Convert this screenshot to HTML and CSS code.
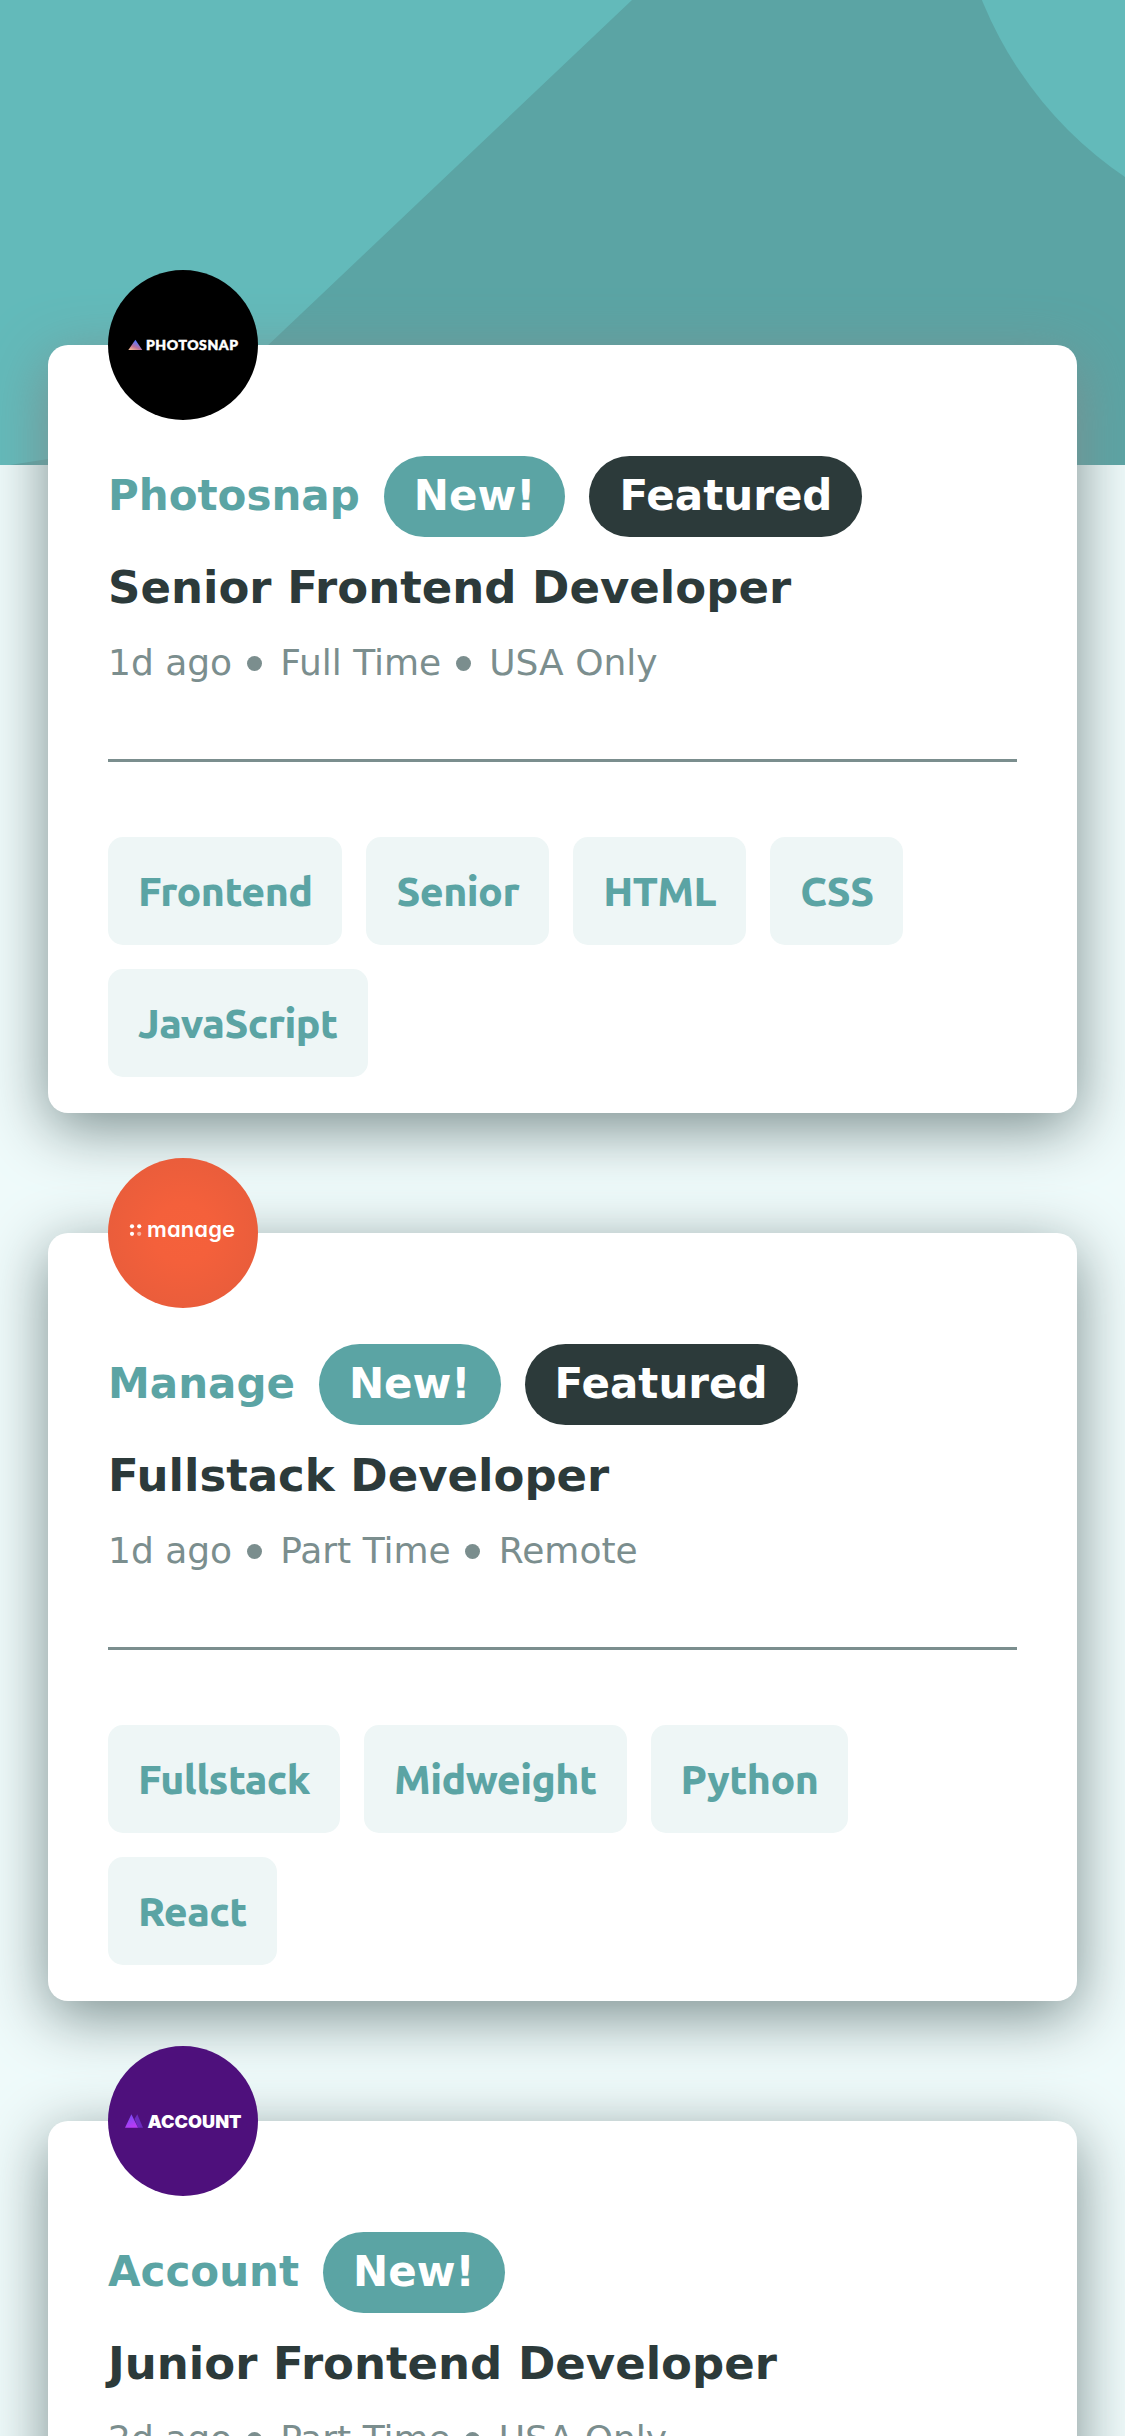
FILE: index.html
```html
<!DOCTYPE html>
<html lang="en">
<head>
<meta charset="utf-8">
<title>Job listings</title>
<link rel="stylesheet" href="styles.css">
</head>
<body>
<header class="banner">
  <svg class="banner-art" viewBox="0 0 1125 465">
    <path class="banner-shade" d="M632 0H1125V465H10L48 459L146 461Z"/>
    <circle class="banner-disc" cx="1345" cy="-147" r="391.7"/>
  </svg>
</header>
<main class="jobs">
  <article class="job">
    <svg class="logo" viewBox="0 0 150 150">
      <defs><linearGradient id="photo" x1="0" y1="1" x2="0.6" y2="0"><stop offset="0" stop-color="#ffc593"/><stop offset=".42" stop-color="#bc7198"/><stop offset=".85" stop-color="#5a77ff"/></linearGradient></defs>
      <circle cx="75" cy="75" r="75" fill="#000"/>
      <path d="M20.300 80L27.400 69.800L34.300 80Z" fill="url(#photo)"/>
      <text class="logo-photosnap" x="38" y="80" textLength="92">PHOTOSNAP</text>
    </svg>
    <div class="head"><h2 class="company">Photosnap</h2><span class="badge">New!</span><span class="badge badge-dark">Featured</span></div>
    <h1 class="role">Senior Frontend Developer</h1>
    <p class="meta"><span>1d ago</span><i class="dot"></i><span>Full Time</span><i class="dot"></i><span>USA Only</span></p>
    <ul class="tags"><li class="tag">Frontend</li><li class="tag">Senior</li><li class="tag">HTML</li><li class="tag">CSS</li><li class="tag">JavaScript</li></ul>
  </article>
  <article class="job">
    <svg class="logo" viewBox="0 0 150 150">
      <defs><radialGradient id="manage"><stop offset="0" stop-color="#f5613b"/><stop offset=".4" stop-color="#f4603b"/><stop offset="1" stop-color="#ea5d3b"/></radialGradient></defs>
      <circle cx="75" cy="75" r="75" fill="url(#manage)"/>
      <g fill="#fff"><circle cx="24" cy="68.300" r="2.100"/><circle cx="31.200" cy="68.300" r="2.100"/><circle cx="24" cy="75.800" r="2.100"/><circle cx="31.200" cy="75.800" r="2.100" opacity=".5"/></g>
      <text class="logo-manage" x="39" y="78.500" textLength="88">manage</text>
    </svg>
    <div class="head"><h2 class="company">Manage</h2><span class="badge">New!</span><span class="badge badge-dark">Featured</span></div>
    <h1 class="role">Fullstack Developer</h1>
    <p class="meta"><span>1d ago</span><i class="dot"></i><span>Part Time</span><i class="dot"></i><span>Remote</span></p>
    <ul class="tags"><li class="tag">Fullstack</li><li class="tag">Midweight</li><li class="tag">Python</li><li class="tag">React</li></ul>
  </article>
  <article class="job">
    <svg class="logo" viewBox="0 0 150 150">
      <defs><linearGradient id="peak" x1="0" y1="0" x2=".4" y2="1"><stop offset="0" stop-color="#6d4cf5"/><stop offset="1" stop-color="#b73bf5"/></linearGradient></defs>
      <circle cx="75" cy="75" r="75" fill="#4e107c"/>
      <path d="M26.500 73L29.300 68.300L35 81.700H30Z" fill="#6c2bc0"/>
      <path d="M17 81.700L23.400 68.300L30 81.700Z" fill="url(#peak)"/>
      <text class="logo-account" x="39.500" y="81.700" textLength="94" lengthAdjust="spacingAndGlyphs">ACCOUNT</text>
    </svg>
    <div class="head"><h2 class="company">Account</h2><span class="badge">New!</span></div>
    <h1 class="role">Junior Frontend Developer</h1>
    <p class="meta"><span>2d ago</span><i class="dot"></i><span>Part Time</span><i class="dot"></i><span>USA Only</span></p>
  </article>
</main>
</body>
</html>
```
FILE: styles.css
```css
* { box-sizing: border-box; margin: 0; padding: 0; }
html, body { height: 2436px; overflow: hidden; }
body {
  background: #effafa;
  font-family: "DejaVu Sans", sans-serif;
}
.banner { height: 465px; background: #63baba; }
.banner-art { display: block; width: 1125px; height: 465px; }
.banner-shade { fill: #5ba4a4; }
.banner-disc { fill: #63baba; }
.jobs {
  display: flex;
  flex-direction: column;
  gap: 120px;
  margin-top: -120px;
  padding: 0 48px;
}
.job {
  position: relative;
  flex: none;
  height: 768px;
  padding: 111px 60px 0;
  border-radius: 20px;
  background: #fff;
  box-shadow: 0 15px 60px #7b8e8e;
}
.logo { position: absolute; left: 60px; top: -75px; width: 150px; height: 150px; }
.logo text { fill: #fff; }
.logo-photosnap { font-family: Lato, sans-serif; font-size: 14px; font-weight: 900; stroke: #fff; stroke-width: .5px; }
.logo-manage { font-family: Inter, sans-serif; font-size: 22px; font-weight: 600; font-feature-settings: "cv11"; }
.logo-account { font-family: Inter, sans-serif; font-size: 18px; font-weight: 900; }
.head { display: flex; align-items: flex-start; gap: 24px; height: 81px; }
.company { color: #5ba4a4; font-size: 42px; line-height: 79px; }
.badge {
  height: 81px;
  padding: 0 30px;
  border-radius: 41px;
  background: #5ba4a4;
  color: #fff;
  font-size: 42px;
  font-weight: 700;
  line-height: 79px;
}
.badge-dark { background: #2c3a3a; }
.role { margin-top: 24px; color: #2c3a3a; font-size: 45px; line-height: 54px; }
.meta {
  display: flex;
  align-items: center;
  height: 42px;
  margin-top: 27px;
  color: #7b8e8e;
  font-size: 36px;
  line-height: 42px;
}
.dot { width: 15px; height: 15px; margin: 0 18.5px 0 14.5px; border-radius: 50%; background: #7b8e8e; }
.tags {
  display: flex;
  flex-wrap: wrap;
  gap: 24px;
  margin-top: 75px;
  padding-top: 75px;
  border-top: 3px solid #7b8e8e;
  list-style: none;
}
.tag {
  height: 108px;
  padding: 0 30px;
  border-radius: 15px;
  background: #eef6f6;
  color: #5ba4a4;
  font-family: Ubuntu, "Noto Sans", sans-serif;
  font-size: 41px;
  font-weight: 780;
  line-height: 109px;
  letter-spacing: -.55px;
}
```
